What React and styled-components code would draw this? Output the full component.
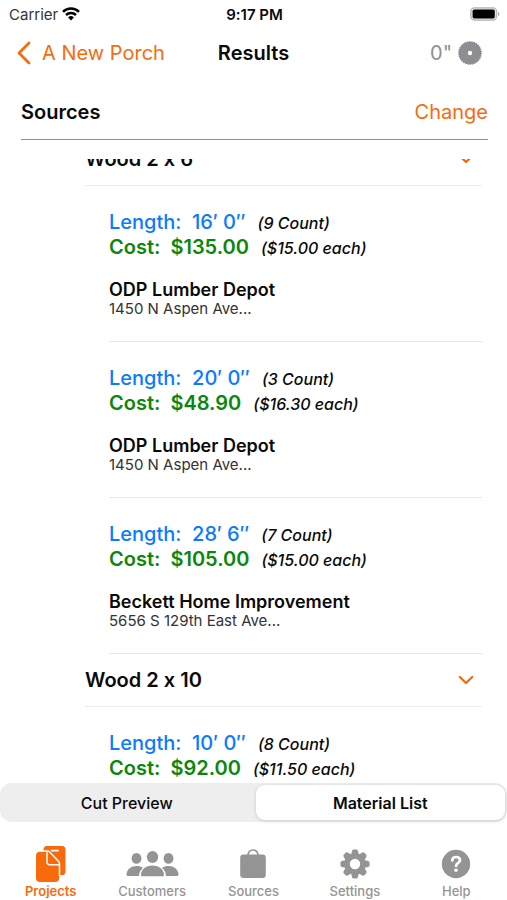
import React, { useLayoutEffect, useRef, useState } from "react";
import styled, { createGlobalStyle } from "styled-components";

const ORANGE = "#f76b0c";

const GlobalStyle = createGlobalStyle`
  * { box-sizing: border-box; }
  body {
    margin: 0;
    background: #fff;
    color: #0a0a0a;
    font-family: Inter, "Liberation Sans", sans-serif;
    font-variant-ligatures: no-contextual;
  }
  button { font: inherit; font-variant-ligatures: inherit; color: inherit; border: 0; padding: 0; background: none; cursor: pointer; }
  h1, h2, h3, p { margin: 0; }
  svg { display: block; flex: none; }
`;

const Screen = styled.div`
  display: flex;
  flex-direction: column;
  height: 100vh;
  overflow: hidden;
`;

const StatusBar = styled.div`
  display: grid;
  grid-template-columns: 1fr auto 1fr;
  align-items: center;
  height: 28px;
  flex: none;
  padding: 0 7px 0 9px;
  font-size: 15px;
`;

const Carrier = styled.span`
  display: flex;
  align-items: center;
  gap: 4px;
  color: #333;
`;

const Clock = styled.span`
  font-weight: 600;
`;

const BatterySlot = styled.span`
  justify-self: end;
`;

const NavBar = styled.header`
  display: grid;
  grid-template-columns: 1fr auto 1fr;
  align-items: center;
  height: 49px;
  flex: none;
  padding: 0 16px;
  font-size: 20px;
`;

const BackButton = styled.button`
  display: flex;
  align-items: center;
  gap: 10px;
  && { color: ${ORANGE}; }
`;

const Title = styled.h1`
  font-size: 20px;
  font-weight: 600;
`;

const KerfButton = styled.button`
  display: flex;
  align-items: center;
  justify-self: end;
  gap: 6px;
  && {
    margin-right: 9px;
    color: #8e8e92;
  }
`;

const SourcesBar = styled.section`
  display: flex;
  align-items: center;
  justify-content: space-between;
  flex: none;
  height: 63px;
  margin: 0 19px 19px 21px;
  padding: 14px 0 7px;
  border-bottom: 1px solid #8f8f8f;
  font-size: 20px;
`;

const SourcesTitle = styled.h2`
  font-size: 20px;
  font-weight: 600;
`;

const ChangeButton = styled.button`
  && { color: ${ORANGE}; }
`;

const List = styled.main`
  flex: 1;
  min-height: 0;
  overflow-y: auto;
  scrollbar-width: none;
  padding: 0 25px 0 85px;
`;

const GroupHeader = styled.button`
  display: flex;
  align-items: center;
  justify-content: space-between;
  width: 100%;
  height: 53px;
  && {
    padding-right: 8px;
    border-bottom: 1px solid #ececec;
    font-size: 20px;
    font-weight: 600;
  }
`;

const Item = styled.article`
  margin-left: 24px;
  padding: 24px 0;
  border-bottom: 1px solid #e9e9e9;
`;

const Measure = styled.p`
  display: flex;
  align-items: baseline;
  height: 25px;
  line-height: 25px;
  font-size: 20px;
  font-weight: ${(p) => p.$weight};
  color: ${(p) => p.$color};
  white-space: pre;
`;

const Note = styled.em`
  margin-left: 12px;
  font-size: 16px;
  font-weight: 500;
  color: #0a0a0a;
`;

const Vendor = styled.h3`
  margin-top: 19px;
  font-size: 18px;
  line-height: 22px;
  font-weight: 600;
`;

const Address = styled.p`
  font-size: 15px;
  line-height: 16px;
  color: #333;
`;

const Segments = styled.div`
  display: grid;
  grid-template-columns: 1fr 1fr;
  gap: 4px;
  flex: none;
  height: 39px;
  padding: 2px;
  border-radius: 12px;
  background: #eee;
`;

const Segment = styled.button`
  && {
    border-radius: 9px;
    font-size: 16px;
    font-weight: ${(p) => (p.$active ? 600 : 500)};
    background: ${(p) => (p.$active ? "#fff" : "transparent")};
    box-shadow: ${(p) => (p.$active ? "0 1px 4px rgba(0, 0, 0, 0.14)" : "none")};
  }
`;

const TabBar = styled.nav`
  display: grid;
  grid-template-columns: repeat(5, 1fr);
  flex: none;
  height: 78px;
  padding-top: 22px;
`;

const Tab = styled.button`
  display: flex;
  flex-direction: column;
  align-items: center;
  height: 55px;
  && {
    color: ${(p) => (p.$active ? ORANGE : "#949494")};
    font-size: 13px;
    line-height: 16px;
    font-weight: ${(p) => (p.$active ? 600 : 500)};
  }
`;

const TabIcon = styled.span`
  display: grid;
  place-items: center;
  height: 39px;
`;

const WifiIcon = () => (
  <svg width="18" height="14" viewBox="0 0 18 14" fill="none" stroke="#000" strokeWidth="2.5">
    <path d="M1 4.9a11.3 11.3 0 0 1 16 0" />
    <path d="M4 8a7.1 7.1 0 0 1 10 0" />
    <path d="M9 13.6 6.1 10.5a4.2 4.2 0 0 1 5.8 0Z" fill="#000" stroke="none" />
  </svg>
);

const BatteryIcon = () => (
  <svg width="30" height="14" viewBox="0 0 30 14">
    <rect x="0.8" y="0.8" width="25.8" height="12.4" rx="3.6" fill="#e4e4e4" stroke="#b4b4b4" strokeWidth="1.2" />
    <rect x="2.6" y="2.5" width="22.2" height="9" rx="1.8" fill="#000" />
    <path d="M28 4.8c2 .8 2 3.6 0 4.4Z" fill="#a9a9a9" />
  </svg>
);

const BackIcon = () => (
  <svg width="16" height="24" viewBox="0 0 16 24" fill="none" stroke="currentColor" strokeWidth="2.8" strokeLinecap="round" strokeLinejoin="round">
    <path d="M13 2 3 12l10 10" />
  </svg>
);

const BladeIcon = () => (
  <svg width="24" height="24" viewBox="0 0 24 24">
    <circle cx="12" cy="12" r="11.2" fill="currentColor" />
    <circle cx="12" cy="12" r="11" fill="none" stroke="currentColor" strokeWidth="1.8" strokeDasharray="1.3 1" />
    <circle cx="12" cy="12" r="2.2" fill="#fff" />
  </svg>
);

const ChevronIcon = () => (
  <svg width="16" height="10" viewBox="0 0 16 10" fill="none" stroke={ORANGE} strokeWidth="2.3" strokeLinecap="round" strokeLinejoin="round">
    <path d="m1.8 2 6.200 6 6.200-6" />
  </svg>
);

const ProjectsIcon = () => (
  <svg width="30" height="36" viewBox="0 0 30 36">
    <rect x="7.500" y="0" width="22" height="29" rx="3.600" fill="currentColor" />
    <path d="M15.500 4.600h6.500" stroke="#fff" strokeWidth="1.700" strokeLinecap="round" />
    <path
      d="M4 5.800h7.200c1 0 1.800.4 2.500 1.100l8.300 8.600c.8.8 1.200 1.800 1.200 2.900V32a4 4 0 0 1-4 4H4a4 4 0 0 1-4-4V9.800a4 4 0 0 1 4-4Z"
      fill="currentColor"
    />
    <path d="M6.500 5.100h4.800c1 0 1.800.4 2.500 1.100l8.700 9c.7.8 1 1.700 1 2.800V30" fill="none" stroke="#fff" strokeWidth="1.500" />
    <path d="M11 6.200v9.900c0 1.600 1 2.600 2.600 2.600h9.500" fill="none" stroke="#fff" strokeWidth="1.500" />
  </svg>
);

const CustomersIcon = () => (
  <svg width="53" height="26" viewBox="0 0 53 26" fill="currentColor">
    <ellipse cx="10.5" cy="7.4" rx="4.9" ry="5.4" />
    <ellipse cx="42.5" cy="7.4" rx="4.9" ry="5.4" />
    <ellipse cx="26.5" cy="6" rx="5.7" ry="6" />
    <path d="M10.5 15c2.5 0 4.7.6 6.5 1.7-2.400 2-3.900 4.800-4 8.300H2.200C.8 25 .3 24.300.5 23 1.200 18.200 5 15 10.500 15Z" />
    <path d="M42.500 15c-2.500 0-4.700.6-6.500 1.700 2.400 2 3.900 4.800 4 8.300h10.800c1.400 0 1.900-.7 1.700-2C51.800 18.200 48 15 42.500 15Z" />
    <path d="M26.500 14.500c6.700 0 11.500 4.200 11.500 9.200 0 1-.6 1.600-1.800 1.600H16.800c-1.200 0-1.800-.6-1.800-1.600 0-5 4.800-9.200 11.500-9.200Z" />
  </svg>
);

const BagIcon = () => (
  <svg width="26" height="30" viewBox="0 0 26 30">
    <rect x="0.2" y="5.5" width="25.6" height="23.5" rx="3.3" fill="currentColor" />
    <path d="M8 7.500V6a5 5 0 0 1 10 0v1.500" fill="none" stroke="currentColor" strokeWidth="1.7" />
  </svg>
);

const GearIcon = () => (
  <svg width="30" height="30" viewBox="0 0 30 30">
    <g fill="currentColor">
      {[0, 45, 90, 135, 180, 225, 270, 315].map((a) => (
        <path key={a} transform={`rotate(${a} 15 15)`} d="M11 6 12.100 1.800Q12.500.4 14 .4h2q1.500 0 1.900 1.400L19 6Z" />
      ))}
    </g>
    <circle cx="15" cy="15" r="7.900" fill="none" stroke="currentColor" strokeWidth="5.400" />
  </svg>
);

const HelpIcon = () => (
  <svg width="30" height="30" viewBox="0 0 30 30">
    <circle cx="15" cy="15" r="14.200" fill="currentColor" />
    <path d="M11.200 11.300c.2-2.200 1.700-3.300 3.900-3.300 2.300 0 3.900 1.200 3.900 3.200 0 1.500-.9 2.200-2.100 3-1.300.8-1.800 1.300-1.800 2.700" fill="none" stroke="#fff" strokeWidth="2.700" strokeLinecap="round" />
    <circle cx="15" cy="21.200" r="1.800" fill="#fff" />
  </svg>
);

const GROUPS = [
  {
    name: "Wood 2 x 6",
    items: [
      { length: "16′ 0″", count: "9 Count", cost: "$135.00", each: "$15.00 each", vendor: "ODP Lumber Depot", address: "1450 N Aspen Ave..." },
      { length: "20′ 0″", count: "3 Count", cost: "$48.90", each: "$16.30 each", vendor: "ODP Lumber Depot", address: "1450 N Aspen Ave..." },
      { length: "28′ 6″", count: "7 Count", cost: "$105.00", each: "$15.00 each", vendor: "Beckett Home Improvement", address: "5656 S 129th East Ave..." },
    ],
  },
  {
    name: "Wood 2 x 10",
    items: [{ length: "10′ 0″", count: "8 Count", cost: "$92.00", each: "$11.50 each", vendor: "ODP Lumber Depot", address: "1450 N Aspen Ave..." }],
  },
];

const TABS = [
  { label: "Projects", Icon: ProjectsIcon },
  { label: "Customers", Icon: CustomersIcon },
  { label: "Sources", Icon: BagIcon },
  { label: "Settings", Icon: GearIcon },
  { label: "Help", Icon: HelpIcon },
];

const START_SCROLL = 26;

export default function App() {
  const listRef = useRef(null);
  const [view, setView] = useState("Material List");
  const [tab, setTab] = useState("Projects");

  useLayoutEffect(() => {
    listRef.current.scrollTop = START_SCROLL;
  }, []);

  return (
    <Screen>
      <GlobalStyle />
      <StatusBar>
        <Carrier>Carrier <WifiIcon /></Carrier>
        <Clock>9:17 PM</Clock>
        <BatterySlot><BatteryIcon /></BatterySlot>
      </StatusBar>
      <NavBar>
        <BackButton type="button"><BackIcon />A New Porch</BackButton>
        <Title>Results</Title>
        <KerfButton type="button">0"<BladeIcon /></KerfButton>
      </NavBar>
      <SourcesBar>
        <SourcesTitle>Sources</SourcesTitle>
        <ChangeButton type="button">Change</ChangeButton>
      </SourcesBar>
      <List ref={listRef}>
        {GROUPS.map((group) => (
          <section key={group.name}>
            <GroupHeader type="button">{group.name}<ChevronIcon /></GroupHeader>
            {group.items.map((item) => (
              <Item key={item.length}>
                <Measure $color="#0a7aff" $weight={500}>{`Length:  ${item.length}`}<Note>({item.count})</Note></Measure>
                <Measure $color="#0b870b" $weight={600}>{`Cost:  ${item.cost}`}<Note>({item.each})</Note></Measure>
                <Vendor>{item.vendor}</Vendor>
                <Address>{item.address}</Address>
              </Item>
            ))}
          </section>
        ))}
      </List>
      <Segments>
        {["Cut Preview", "Material List"].map((name) => (
          <Segment key={name} type="button" aria-pressed={view === name} $active={view === name} onClick={() => setView(name)}>
            {name}
          </Segment>
        ))}
      </Segments>
      <TabBar>
        {TABS.map(({ label, Icon }) => (
          <Tab key={label} type="button" $active={tab === label} onClick={() => setTab(label)}>
            <TabIcon><Icon /></TabIcon>
            {label}
          </Tab>
        ))}
      </TabBar>
    </Screen>
  );
}
